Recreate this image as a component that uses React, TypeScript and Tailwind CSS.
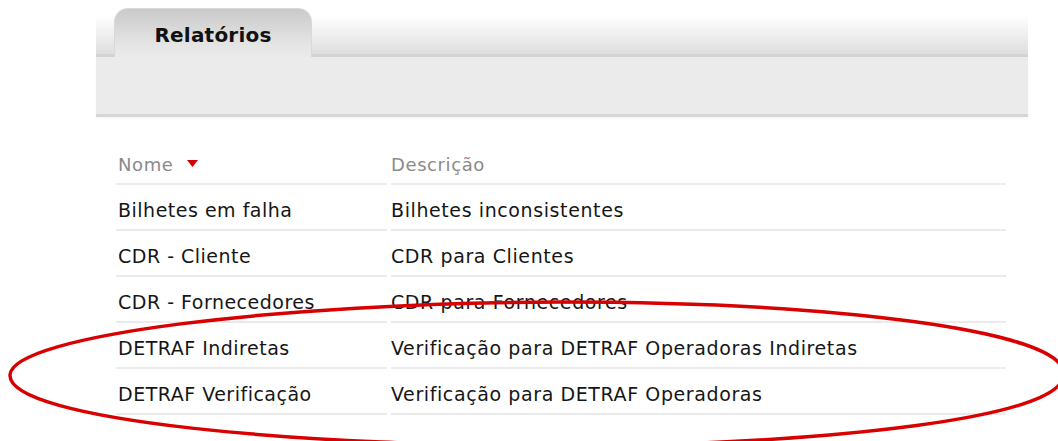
import React from 'react';

const reports = [
  { name: 'Bilhetes em falha', desc: 'Bilhetes inconsistentes' },
  { name: 'CDR - Cliente', desc: 'CDR para Clientes' },
  { name: 'CDR - Fornecedores', desc: 'CDR para Fornecedores' },
  { name: 'DETRAF Indiretas', desc: 'Verificação para DETRAF Operadoras Indiretas' },
  { name: 'DETRAF Verificação', desc: 'Verificação para DETRAF Operadoras' },
];

export default function App() {
  return (
    <div className="relative w-[1058px] h-[441px] bg-white overflow-hidden font-['DejaVu_Sans',Verdana,sans-serif]">
      {/* Tab strip */}
      <div className="ml-[96px] w-[932px]">
        <div className="flex items-end h-[57px] bg-[linear-gradient(to_bottom,#ffffff_26%,#dfdfdf_92%)]">
          <div className="w-[18px] h-full border-b-[3px] border-[#d3d3d3]" />
          <div className="w-[198px] h-[49px] rounded-t-[14px] bg-[linear-gradient(to_bottom,#cacaca,#e3e3e3_70%,#ebebeb)] border-x border-t border-[#d9d9d9] border-b-0 flex items-center justify-center pt-[4px]">
            <span className="text-[20px] font-bold text-[#111] tracking-[0.2px]">Relatórios</span>
          </div>
          <div className="flex-1 h-full border-b-[3px] border-[#d3d3d3]" />
        </div>
        <div className="h-[60px] bg-[#ebebeb] border-b-[3px] border-[#d6d6d6] shadow-[0_2px_3px_rgba(0,0,0,0.03)]" />
      </div>

      {/* Report list */}
      <div className="ml-[116px] mt-[22px] w-[890px] grid grid-cols-[271px_615px] gap-x-[4px]">
        <div className="h-[46px] border-b-2 border-[#ebebeb] flex items-center pt-[6px] pl-[2px] text-[18px] tracking-[0.6px] text-[#8a8a8a]">
          Nome
          <svg className="ml-[13px] mb-[2px]" width="11" height="7" viewBox="0 0 11 7">
            <polygon points="0,0 11,0 5.5,7" fill="#d40000" />
          </svg>
        </div>
        <div className="h-[46px] border-b-2 border-[#ebebeb] flex items-center pt-[6px] text-[18px] tracking-[0.6px] text-[#8a8a8a]">
          Descrição
        </div>
        {reports.map(r => (
          <React.Fragment key={r.name}>
            <div className="h-[46px] border-b-2 border-[#ebebeb] flex items-center pt-[6px] pl-[2px] text-[19px] tracking-[0.5px] text-[#161616]">
              {r.name}
            </div>
            <div className="h-[46px] border-b-2 border-[#ebebeb] flex items-center pt-[6px] text-[19px] tracking-[0.6px] text-[#161616]">
              {r.desc}
            </div>
          </React.Fragment>
        ))}
      </div>

      {/* Hand-drawn highlight ring */}
      <svg className="absolute inset-0 pointer-events-none" width="1058" height="441" viewBox="0 0 1058 441">
        <path
          d="M 10 375 C 12 335, 280 303, 560 302 C 830 302, 1064 330, 1064 374 C 1064 420, 820 442, 600 446 C 300 448, 8 420, 10 375 Z"
          fill="none"
          stroke="#d80000"
          strokeWidth="3.5"
        />
      </svg>
    </div>
  );
}
